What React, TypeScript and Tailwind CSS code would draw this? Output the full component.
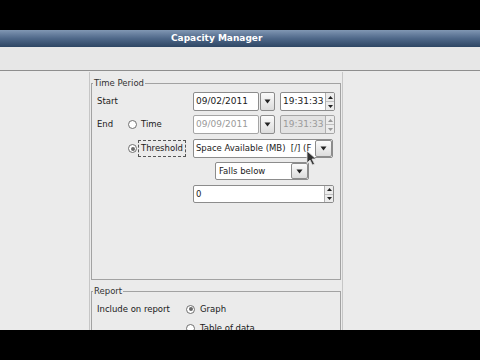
import React from "react";

const font = { fontFamily: '"DejaVu Sans", "Liberation Sans", sans-serif' };

function Arrow() {
  return (
    <svg width="7" height="5" viewBox="0 0 7 5">
      <path d="M0.5 0.5 L6.5 0.5 L3.5 4.5 Z" fill="#222" />
    </svg>
  );
}

function DropBtn({ w = 15 }: { w?: number }) {
  return (
    <div
      className="h-full flex items-center justify-center border border-[#8c8c8c] rounded-[2px] bg-gradient-to-b from-[#fbfbfb] to-[#dcdcdc]"
      style={{ width: w }}
    >
      <Arrow />
    </div>
  );
}

function Spin({ disabled = false }: { disabled?: boolean }) {
  return (
    <div className="w-[9px] h-full flex flex-col border-l border-[#b0b0b0] bg-[#ececec]">
      <div className="flex-1 flex items-center justify-center border-b border-[#c0c0c0]">
        <svg width="5" height="3" viewBox="0 0 5 3">
          <path d="M0 3 L2.5 0 L5 3 Z" fill={disabled ? "#999" : "#222"} />
        </svg>
      </div>
      <div className="flex-1 flex items-center justify-center">
        <svg width="5" height="3" viewBox="0 0 5 3">
          <path d="M0 0 L2.5 3 L5 0 Z" fill={disabled ? "#999" : "#222"} />
        </svg>
      </div>
    </div>
  );
}

function Radio({ checked = false }: { checked?: boolean }) {
  return (
    <div className="w-[9px] h-[9px] rounded-full border border-[#6f6f6f] bg-white flex items-center justify-center shrink-0">
      {checked && <div className="w-[4px] h-[4px] rounded-full bg-[#6a6a6a]" />}
    </div>
  );
}

export default function App() {
  return (
    <div
      className="w-[480px] h-[360px] bg-black flex flex-col overflow-hidden text-[8.5px] text-[#1a1a1a] relative"
      style={font}
    >
      <div className="h-[30px] shrink-0 bg-black" />
      <div className="h-[17px] shrink-0 bg-gradient-to-b from-[#8197b3] via-[#4f6889] to-[#2e4664] flex items-center pl-[171px]">
        <span className="text-white font-bold text-[9px]">Capacity Manager</span>
      </div>
      <div className="h-[24px] shrink-0 bg-[#e7e7e7] border-b border-[#8e8e8e]" />
      <div className="flex-1 min-h-0 overflow-hidden bg-[#ebebeb] pl-[89px] pt-[1px]">
        <div className="w-[254px] h-full border-l border-r border-[#c6c6c6] pl-[1px] pr-[1px] pt-[6px]">
          <fieldset className="border border-[#a2a2a2] h-[202px] m-0 pl-[5px] pr-0 pt-0 pb-0 min-w-0">
            <legend className="px-[1px] ml-[-4px] leading-[10px] text-[#333]">Time Period</legend>
            <div className="flex h-[19px] items-center mt-[4px]">
              <span className="w-[96px]">Start</span>
              <div className="w-[66px] h-full border border-[#8c8c8c] rounded-[2px] bg-white flex items-center pl-[2px] text-[9px]">09/02/2011</div>
              <div className="ml-[1px] h-full"><DropBtn /></div>
              <div className="ml-[5px] w-[55px] h-full border border-[#8c8c8c] rounded-[2px] bg-white flex items-center overflow-hidden">
                <span className="flex-1 pl-[2px] text-[9px]">19:31:33</span>
                <Spin />
              </div>
            </div>
            <div className="flex h-[19px] items-center mt-[4px]">
              <span className="w-[31px]">End</span>
              <Radio />
              <span className="ml-[4px] w-[52px]">Time</span>
              <div className="w-[66px] h-full border border-[#a5a5a5] rounded-[2px] bg-white flex items-center pl-[2px] text-[9px] text-[#9a9a9a]">09/09/2011</div>
              <div className="ml-[1px] h-full"><DropBtn /></div>
              <div className="ml-[5px] w-[55px] h-full border border-[#a5a5a5] rounded-[2px] bg-[#e2e2e2] flex items-center overflow-hidden">
                <span className="flex-1 pl-[2px] text-[9px] text-[#9a9a9a]">19:31:33</span>
                <Spin disabled />
              </div>
            </div>
            <div className="flex h-[19px] items-center mt-[5px]">
              <span className="w-[31px]" />
              <Radio checked />
              <span className="ml-[1px] h-[17px] px-[2px] border border-dashed border-[#555] flex items-center">Threshold</span>
              <div className="ml-[7px] w-[140px] h-full border border-[#8c8c8c] rounded-[2px] bg-white flex items-center overflow-hidden">
                <span className="flex-1 pl-[2px] whitespace-nowrap overflow-hidden">Space Available (MB)&nbsp; [/] (F</span>
                <DropBtn w={17} />
              </div>
            </div>
            <div className="flex h-[18px] items-center mt-[4px] pl-[118px]">
              <div className="w-[94px] h-full border border-[#8c8c8c] rounded-[2px] bg-white flex items-center overflow-hidden">
                <span className="flex-1 pl-[3px]">Falls below</span>
                <DropBtn w={17} />
              </div>
            </div>
            <div className="flex h-[18px] items-center mt-[5px] pl-[96px]">
              <div className="w-[141px] h-full border border-[#8c8c8c] rounded-[2px] bg-white flex items-center overflow-hidden">
                <span className="flex-1 pl-[2px]">0</span>
                <Spin />
              </div>
            </div>
          </fieldset>
          <fieldset className="border border-[#a2a2a2] h-[80px] m-0 mt-[6px] pl-[5px] pr-0 pt-0 pb-0 min-w-0">
            <legend className="px-[1px] ml-[-4px] leading-[10px] text-[#333]">Report</legend>
            <div className="flex h-[14px] items-center mt-[6px]">
              <span className="w-[89px]">Include on report</span>
              <Radio checked />
              <span className="ml-[5px]">Graph</span>
            </div>
            <div className="flex h-[14px] items-center mt-[5px]">
              <span className="w-[89px]" />
              <Radio />
              <span className="ml-[5px]">Table of data</span>
            </div>
          </fieldset>
        </div>
      </div>
      <div className="h-[30px] shrink-0 bg-black" />
      <svg className="absolute left-[306px] top-[150px]" width="12" height="16" viewBox="0 0 12 16">
        <path d="M1 1 L1 13 L4 10 L6.5 15 L8.5 14 L6 9 L10 9 Z" fill="#333" stroke="#ddd" strokeWidth="0.8" />
      </svg>
    </div>
  );
}
